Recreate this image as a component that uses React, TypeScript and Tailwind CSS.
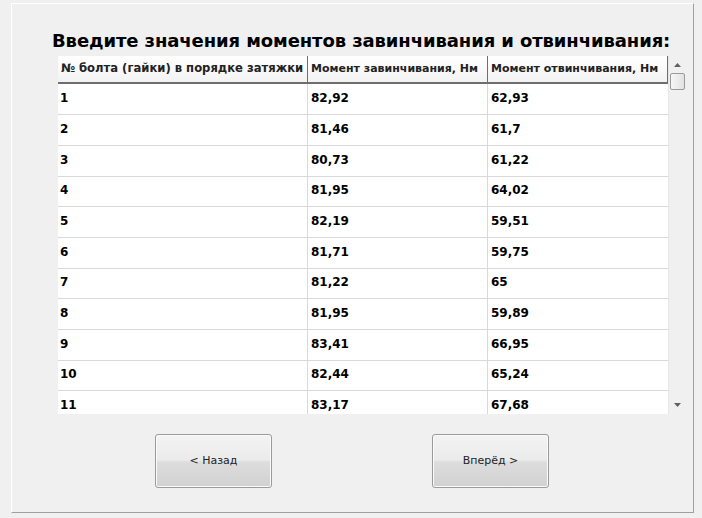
const rows = [
  { n: "1", a: "82,92", b: "62,93", h: "h-[31px]" },
  { n: "2", a: "81,46", b: "61,7", h: "h-[31px]" },
  { n: "3", a: "80,73", b: "61,22", h: "h-[31px]" },
  { n: "4", a: "81,95", b: "64,02", h: "h-[30px]" },
  { n: "5", a: "82,19", b: "59,51", h: "h-[31px]" },
  { n: "6", a: "81,71", b: "59,75", h: "h-[31px]" },
  { n: "7", a: "81,22", b: "65", h: "h-[30px]" },
  { n: "8", a: "81,95", b: "59,89", h: "h-[31px]" },
  { n: "9", a: "83,41", b: "66,95", h: "h-[31px]" },
  { n: "10", a: "82,44", b: "65,24", h: "h-[30px]" },
  { n: "11", a: "83,17", b: "67,68", h: "h-[31px]" },
];

function Button({ label }: { label: string }) {
  return (
    <button className="flex h-[54px] w-[117px] items-center justify-center rounded-[3px] border border-[#9a9a9a] bg-[linear-gradient(to_bottom,#f3f3f3_0%,#ebebeb_48%,#dddddd_52%,#d1d1d1_100%)] text-[11px] text-[#222] shadow-[inset_0_0_0_1px_#fbfbfb]">
      {label}
    </button>
  );
}

export default function App() {
  return (
    <div className="h-[518px] w-[702px] overflow-hidden bg-[#f0f0f0] pl-[11px] pt-[3px] font-['DejaVu_Sans',sans-serif]">
      <div className="flex h-[510px] w-[683px] flex-col border-b border-l border-r border-t border-b-[#a0a0a0] border-l-white border-r-[#a0a0a0] border-t-white">
        <h1 className="ml-[40px] mt-[23px] h-[27px] whitespace-nowrap text-[18px] font-bold leading-[27px] tracking-[-0.1px] text-black">
          Введите значения моментов завинчивания и отвинчивания:
        </h1>
        <div className="ml-[46px] mt-[2px] flex h-[358px] w-[628px] overflow-hidden">
          <div className="flex w-[610px] flex-col bg-white">
            <div className="flex h-[28px] shrink-0 border-b-2 border-b-[#6e6e6e] bg-[linear-gradient(to_bottom,#ffffff,#f3f3f3)] font-bold text-[#222]">
              <div className="flex w-[250px] items-center whitespace-nowrap border-r border-[#6e6e6e] pl-[3px] text-[11.6px]">
                № болта (гайки) в порядке затяжки
              </div>
              <div className="flex w-[180px] items-center whitespace-nowrap border-r border-[#6e6e6e] pl-[3px] text-[11px]">
                Момент завинчивания, Нм
              </div>
              <div className="flex w-[180px] items-center whitespace-nowrap border-r border-[#6e6e6e] pl-[3px] text-[11px]">
                Момент отвинчивания, Нм
              </div>
            </div>
            {rows.map((r) => (
              <div key={r.n} className={`flex shrink-0 border-b border-[#d9d9d9] text-[12px] font-bold text-black ${r.h}`}>
                <div className="flex w-[250px] items-center border-r border-[#d9d9d9] pb-[3px] pl-[2px]">{r.n}</div>
                <div className="flex w-[180px] items-center border-r border-[#d9d9d9] pb-[3px] pl-[3px]">{r.a}</div>
                <div className="flex w-[180px] items-center pb-[3px] pl-[3px]">{r.b}</div>
              </div>
            ))}
          </div>
          <div className="relative flex w-[18px] flex-col items-center border-l border-[#e6e6e6] bg-[#f0f0f0]">
            <svg width="7" height="4" viewBox="0 0 7 4" className="mt-[7px]">
              <path d="M3.5 0 L7 4 L0 4 Z" fill="#606060" />
            </svg>
            <div className="mt-[6px] h-[17px] w-[15px] rounded-[2px] border border-[#9a9a9a] bg-[linear-gradient(to_right,#f6f6f6,#e2e2e2)]" />
            <div className="flex-1" />
            <svg width="7" height="4" viewBox="0 0 7 4" className="mb-[7px]">
              <path d="M0 0 L7 0 L3.5 4 Z" fill="#606060" />
            </svg>
          </div>
        </div>
        <div className="mt-[20px] flex">
          <div className="ml-[143px]">
            <Button label="< Назад" />
          </div>
          <div className="ml-[160px]">
            <Button label="Вперёд >" />
          </div>
        </div>
      </div>
    </div>
  );
}
